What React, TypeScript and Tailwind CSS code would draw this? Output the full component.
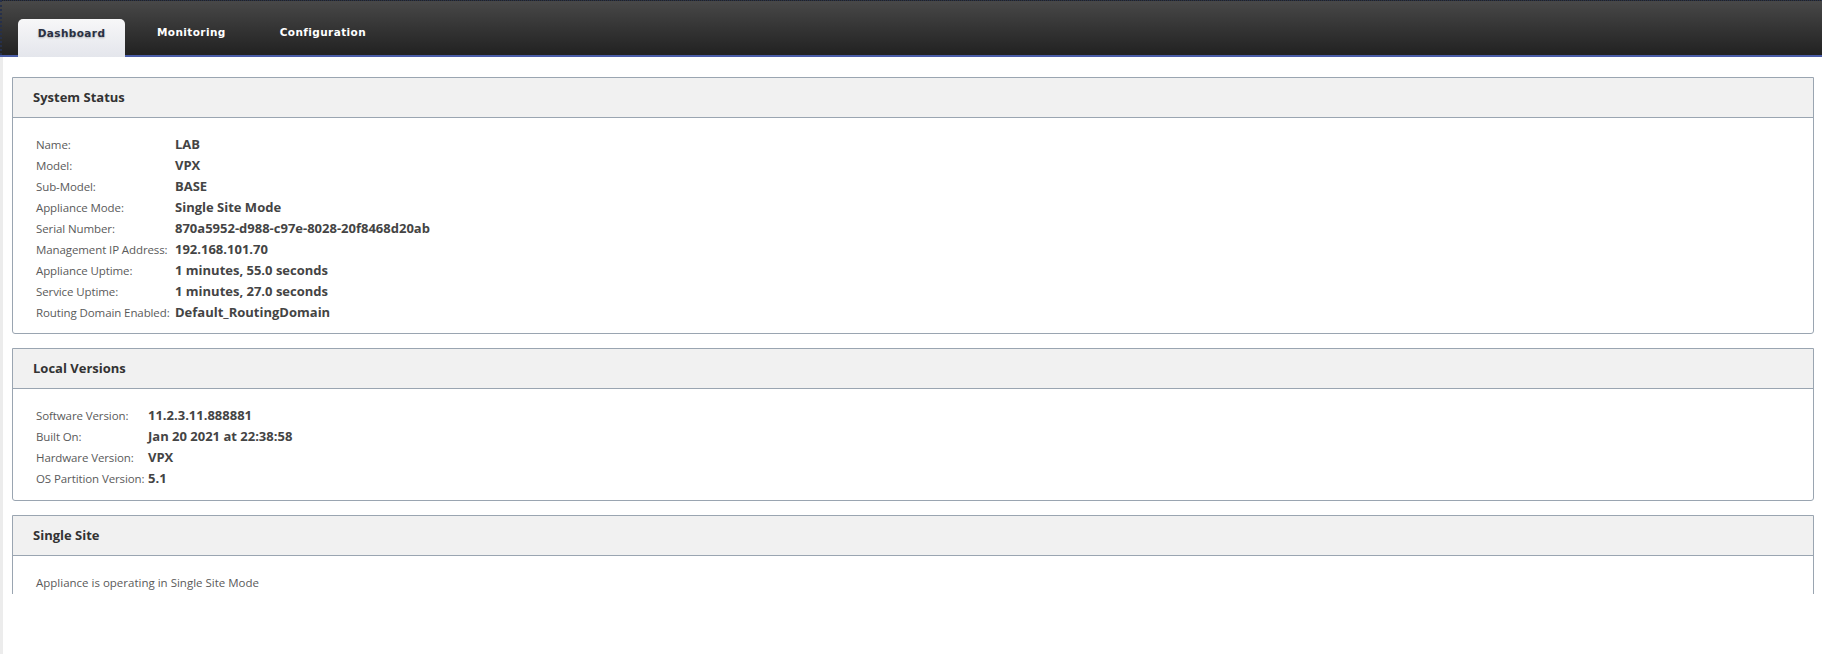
import React from "react";

const font = { fontFamily: '"Open Sans", "Noto Sans", sans-serif' };

function Row({ label, value, w }: { label: string; value: string; w: string }) {
  return (
    <div className="flex h-[21px] items-center whitespace-nowrap">
      <div className={`${w} shrink-0 text-[11.5px] tracking-[-0.1px] text-[#5a5a5a]`}>{label}</div>
      <div className="text-[13px] font-bold text-[#444]">{value}</div>
    </div>
  );
}

function Panel({ title, children, pb }: { title: string; children: React.ReactNode; pb: string }) {
  return (
    <div className="rounded-b-[3px] border border-[#9aa5b1] bg-white">
      <div className="flex h-[40px] items-center border-b border-[#9aa5b1] bg-[#f1f1f1] pl-[20px] text-[13px] font-bold text-[#333]">
        {title}
      </div>
      <div className={`pl-[23px] pt-[16px] ${pb}`}>{children}</div>
    </div>
  );
}

export default function App() {
  const sys: [string, string][] = [
    ["Name:", "LAB"],
    ["Model:", "VPX"],
    ["Sub-Model:", "BASE"],
    ["Appliance Mode:", "Single Site Mode"],
    ["Serial Number:", "870a5952-d988-c97e-8028-20f8468d20ab"],
    ["Management IP Address:", "192.168.101.70"],
    ["Appliance Uptime:", "1 minutes, 55.0 seconds"],
    ["Service Uptime:", "1 minutes, 27.0 seconds"],
    ["Routing Domain Enabled:", "Default_RoutingDomain"],
  ];
  const ver: [string, string][] = [
    ["Software Version:", "11.2.3.11.888881"],
    ["Built On:", "Jan 20 2021 at 22:38:58"],
    ["Hardware Version:", "VPX"],
    ["OS Partition Version:", "5.1"],
  ];
  return (
    <div className="h-[654px] w-full overflow-hidden bg-white" style={font}>
      <div className="relative">
        <div className="h-[55px] border-l-2 border-t border-dotted border-[#26304a] bg-gradient-to-b from-[#484848] to-[#222222]">
          <div className="flex h-full items-end" style={{ fontFamily: '"DejaVu Sans", Verdana, sans-serif' }}>
            <div className="relative z-10 -mb-[2px] ml-[16px] flex h-[38px] w-[107px] items-start justify-center rounded-t-[5px] bg-gradient-to-b from-[#f7f7f8] to-[#e4e6ec] pt-[7px] text-[10.5px] font-bold tracking-[0.4px] text-[#2a3042] [text-shadow:0_1px_2px_rgba(0,0,0,0.25)]">
              Dashboard
            </div>
            <div className="mb-[14px] ml-[32px] text-[10.5px] font-bold tracking-[0.4px] text-white">Monitoring</div>
            <div className="mb-[14px] ml-[54px] text-[10.5px] font-bold tracking-[0.4px] text-white">Configuration</div>
          </div>
        </div>
        <div className="h-[2px] bg-[#4a5da8]" />
      </div>
      <div className="flex h-[597px]">
        <div className="w-[3px] shrink-0 bg-[#ececec]" />
        <div className="h-[537px] flex-1 overflow-hidden pl-[9px] pr-[8px] pt-[20px]">
          <div className="flex flex-col gap-[14px]">
            <Panel title="System Status" pb="pb-[10px]">
              {sys.map(([l, v]) => (
                <Row key={l} label={l} value={v} w="w-[139px]" />
              ))}
            </Panel>
            <Panel title="Local Versions" pb="pb-[11px]">
              {ver.map(([l, v]) => (
                <Row key={l} label={l} value={v} w="w-[112px]" />
              ))}
            </Panel>
            <Panel title="Single Site" pb="pb-[20px]">
              <div className="flex h-[21px] items-center text-[11.5px] text-[#5a5a5a]">Appliance is operating in Single Site Mode</div>
            </Panel>
          </div>
        </div>
      </div>
    </div>
  );
}
